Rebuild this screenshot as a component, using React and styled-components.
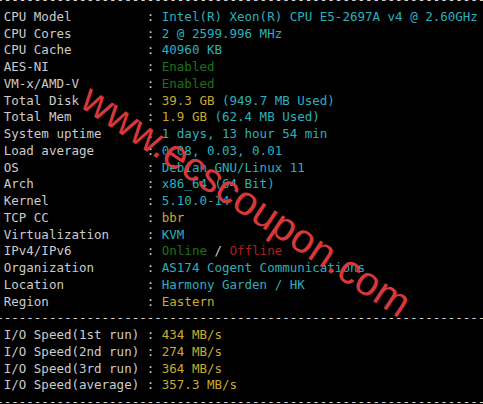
import React from "react";
import styled, { createGlobalStyle } from "styled-components";

// bench.sh style output, Windows terminal look
const GlobalStyle = createGlobalStyle`
	html, body {
		margin: 0;
		padding: 0;
		background: #000000;
		overflow: hidden;
	}
`;

const tones = {
	label: "#cccccc",
	cyan: "#2bb0bf",
	yellow: "#c7ab2e",
	green: "#1d7219",
	red: "#b41c1c",
	rule: "#d6d6d6",
};

const Screen = styled.div`
	position: relative;
	width: 483px;
	height: 404px;
	overflow: hidden;
	background: #000000;
`;

const Output = styled.div`
	margin: -8px 0 0 -3.8px;
	font-family: "DejaVu Sans Mono", "Liberation Mono", monospace;
	font-size: 12.5px;
	line-height: 16.76px;
	white-space: pre;
	color: ${tones.label};
`;

const Line = styled.div`
	height: 16.76px;
`;

const Rule = styled(Line)`
	color: ${tones.rule};
	overflow: hidden;
`;

const Value = styled.span`
	color: ${(props) => tones[props.$tone] || tones.label};
`;

const Watermark = styled.div`
	position: absolute;
	left: 246px;
	top: 201px;
	transform: translate(-50%, -50%) rotate(33.5deg);
	font-family: "Liberation Sans", Arial, sans-serif;
	font-size: 41px;
	line-height: 1;
	color: #d8383a;
	white-space: nowrap;
	pointer-events: none;
`;

const info = [
	["CPU Model", [["cyan", "Intel(R) Xeon(R) CPU E5-2697A v4 @ 2.60GHz"]]],
	["CPU Cores", [["cyan", "2 @ 2599.996 MHz"]]],
	["CPU Cache", [["cyan", "40960 KB"]]],
	["AES-NI", [["green", "Enabled"]]],
	["VM-x/AMD-V", [["green", "Enabled"]]],
	["Total Disk", [["yellow", "39.3 GB"], ["label", " "], ["cyan", "(949.7 MB Used)"]]],
	["Total Mem", [["yellow", "1.9 GB"], ["label", " "], ["cyan", "(62.4 MB Used)"]]],
	["System uptime", [["cyan", "1 days, 13 hour 54 min"]]],
	["Load average", [["cyan", "0.08, 0.03, 0.01"]]],
	["OS", [["cyan", "Debian GNU/Linux 11"]]],
	["Arch", [["cyan", "x86_64 (64 Bit)"]]],
	["Kernel", [["cyan", "5.10.0-14"]]],
	["TCP CC", [["yellow", "bbr"]]],
	["Virtualization", [["cyan", "KVM"]]],
	["IPv4/IPv6", [["green", "Online"], ["label", " / "], ["red", "Offline"]]],
	["Organization", [["cyan", "AS174 Cogent Communications"]]],
	["Location", [["cyan", "Harmony Garden / HK"]]],
	["Region", [["yellow", "Eastern"]]],
];

const io = [
	["I/O Speed(1st run)", [["yellow", "434 MB/s"]]],
	["I/O Speed(2nd run)", [["yellow", "274 MB/s"]]],
	["I/O Speed(3rd run)", [["yellow", "364 MB/s"]]],
	["I/O Speed(average)", [["yellow", "357.3 MB/s"]]],
];

const dashes = "-".repeat(70);

const InfoLine = ({ label, parts }) => (
	<Line>
		{" " + label.padEnd(18, " ") + " : "}
		{parts.map(([tone, text], i) => (
			<Value key={i} $tone={tone}>
				{text}
			</Value>
		))}
	</Line>
);

const App = () => {
	return (
		<>
			<GlobalStyle />
			<Screen>
				<Output>
					<Rule>{dashes}</Rule>
					{info.map(([label, parts]) => (
						<InfoLine key={label} label={label} parts={parts} />
					))}
					<Rule>{dashes}</Rule>
					{io.map(([label, parts]) => (
						<InfoLine key={label} label={label} parts={parts} />
					))}
					<Rule>{dashes}</Rule>
				</Output>
				<Watermark>www.ecscoupon.com</Watermark>
			</Screen>
		</>
	);
};

export default App;
